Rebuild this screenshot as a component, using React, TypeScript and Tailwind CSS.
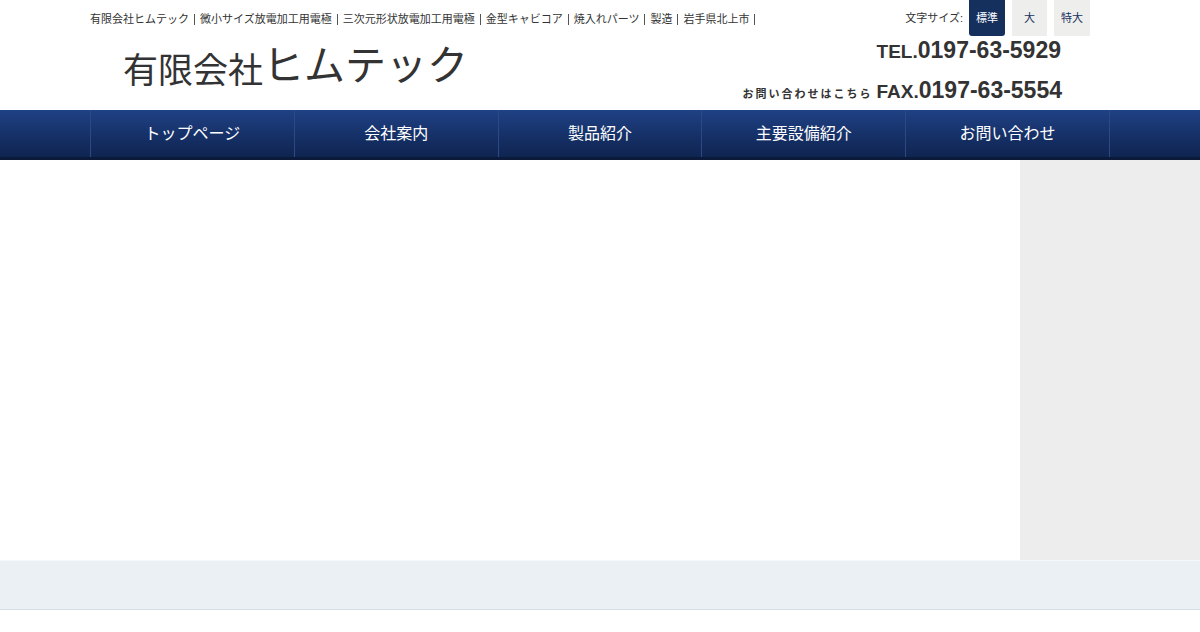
const links = [
  "有限会社ヒムテック",
  "微小サイズ放電加工用電極",
  "三次元形状放電加工用電極",
  "金型キャビコア",
  "焼入れパーツ",
  "製造",
  "岩手県北上市",
];

const navItems = ["トップページ", "会社案内", "製品紹介", "主要設備紹介", "お問い合わせ"];

const font = {
  fontFamily: '"Liberation Sans", "Noto Sans CJK JP", sans-serif',
};

export default function App() {
  return (
    <div className="min-h-[632px] bg-white text-[#333]" style={font}>
      <header className="h-[110px]">
        <div className="mx-auto flex h-full w-[1020px] justify-between whitespace-nowrap">
          <div className="flex shrink-0 flex-col">
            <ul className="flex pt-[12px] text-[11px] leading-[14px] text-[#333]">
              {links.map((l) => (
                <li key={l} className="flex items-center">
                  <span>{l}</span>
                  <span className="mx-[5px] inline-block h-[11px] w-px bg-[#555]" />
                </li>
              ))}
            </ul>
            <h1 className="ml-[33px] mt-[18px] flex items-end leading-none text-[#333]">
              <span className="text-[35px] font-normal">有限会社</span>
              <span className="text-[41px] font-normal leading-[44px]">ヒムテック</span>
            </h1>
          </div>
          <div className="mr-[20px] flex min-w-0 flex-col items-end">
            <div className="flex items-start gap-[7px] text-[11px]">
              <span className="mr-[-1px] mt-[10px] text-[#333]">文字サイズ:</span>
              <button className="h-[36px] w-[36px] rounded-b-[3px] bg-[#16305e] text-white">標準</button>
              <button className="h-[36px] w-[35px] bg-[#eeeeec] text-[#16305e]">大</button>
              <button className="h-[36px] w-[36px] bg-[#eeeeec] text-[#16305e]">特大</button>
            </div>
            <div className="mr-[29px] mt-[1px] flex shrink-0 items-baseline text-[23px] font-bold leading-[26px] text-[#333]">
              <span className="text-[19px]">TEL.</span>0197-63-5929
            </div>
            <div className="mr-[28px] mt-[12px] flex shrink-0 items-baseline text-[23px] font-bold leading-[26px] text-[#333]">
              <span className="mr-[4px] text-[11px] tracking-[2px]">お問い合わせはこちら</span>
              <span className="text-[19px]">FAX.</span>0197-63-5554
            </div>
          </div>
        </div>
      </header>

      <nav className="h-[50px] bg-gradient-to-b from-[#1f4185] to-[#0f2450] border-b-[3px] border-[#0b1a38]">
        <ul className="mx-auto flex h-[47px] w-[1020px] border-l border-[#2b4a85]">
          {navItems.map((n) => (
            <li
              key={n}
              className="flex h-full w-[204px] items-center justify-center border-r border-[#2b4a85] text-[16px] text-white"
            >
              {n}
            </li>
          ))}
        </ul>
      </nav>

      <main className="flex h-[400px]">
        <div className="w-[1020px] bg-white" />
        <aside className="flex-1 bg-[#ededed]" />
      </main>

      <footer className="h-[50px] border-t border-[#f4f8fa] border-b border-b-[#d6dfe4] bg-[#eaf0f3]" />
    </div>
  );
}
